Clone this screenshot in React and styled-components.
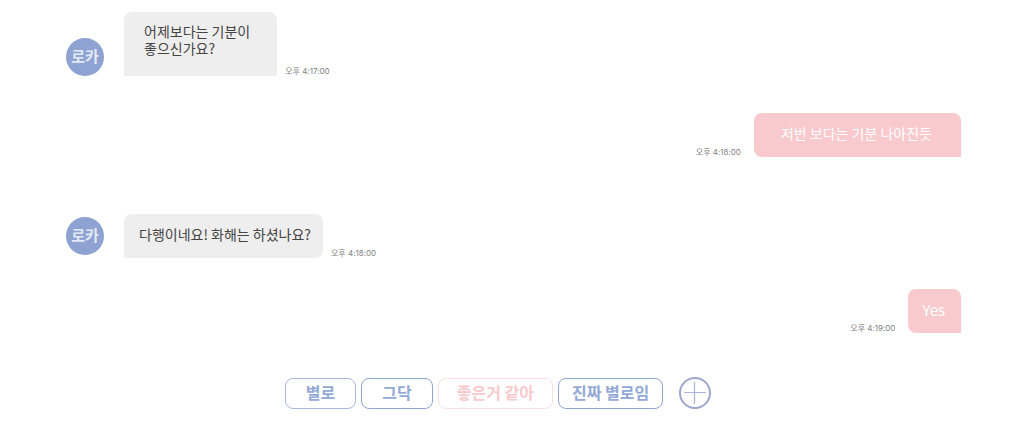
import React from 'react';
import styled, { createGlobalStyle } from 'styled-components';

const GlobalStyle = createGlobalStyle`
  * { box-sizing: border-box; }
  body {
    margin: 0;
    background: #fff;
    font-family: "Noto Sans CJK KR", "Noto Sans", sans-serif;
  }
`;

const Page = styled.main`
  padding: 12px 63px 16px 66px;
`;

const Messages = styled.ol`
  list-style: none;
  margin: 0;
  padding: 0;
`;

const Message = styled.li`
  display: flex;
  flex-direction: ${(p) => (p.$mine ? 'row-reverse' : 'row')};
  align-items: flex-end;
  margin-top: ${(p) => p.$gap || 0}px;
`;

const Avatar = styled.div`
  display: flex;
  align-items: center;
  justify-content: center;
  flex: none;
  width: 38px;
  height: 38px;
  margin: 0 20px ${(p) => p.$lift || 0}px 0;
  padding-bottom: 2px;
  border-radius: 50%;
  background: #8ea3d2;
  color: #e4e9f5;
  font-size: 15px;
  font-weight: 700;
  line-height: 20px;
`;

const Bubble = styled.p`
  margin: 0;
  padding: ${(p) => p.$pad};
  border-radius: ${(p) => (p.$mine ? '8px 8px 0 8px' : '8px 8px 8px 0')};
  border-bottom-right-radius: ${(p) => (p.$square || p.$mine ? 0 : 8)}px;
  background: ${(p) => (p.$mine ? '#f8c9cd' : '#eee')};
  color: ${(p) => (p.$mine ? '#fff' : '#444')};
  font-size: ${(p) => (p.$large ? 15 : 14)}px;
  line-height: 17px;
`;

const Time = styled.time`
  flex: none;
  margin: ${(p) => (p.$mine ? '0 13px 0 0' : '0 0 0 8px')};
  color: #808080;
  font-family: Inter, "Noto Sans CJK KR", sans-serif;
  font-size: 8px;
  line-height: 10px;
`;

const Replies = styled.div`
  display: flex;
  align-items: center;
  justify-content: center;
  gap: 5px;
  margin-top: 43px;
  padding-right: 30px;
`;

const Reply = styled.button`
  height: 31px;
  padding: 0 ${(p) => p.$pad}px 2px;
  border: 1px solid ${(p) => (p.$pink ? '#fbdfe2' : p.$pale ? '#a9b9de' : '#8ea6d4')};
  border-radius: 8px;
  background: #fff;
  color: ${(p) => (p.$pink ? '#f8c9cd' : '#93a9d6')};
  font-family: inherit;
  font-size: 16px;
  font-weight: 700;
  line-height: 20px;
  cursor: pointer;
`;

const AddButton = styled.button`
  width: 34px;
  height: 34px;
  margin-left: 10px;
  padding: 0;
  border: 0;
  background: none;
  cursor: pointer;

  svg { display: block; }
`;

export default function App() {
  return (
    <>
      <GlobalStyle />
      <Page>
        <Messages>
          <Message>
            <Avatar>로카</Avatar>
            <Bubble $square $pad="11px 27px 19px 20px">
              어제보다는 기분이<br />좋으신가요?
            </Bubble>
            <Time>오후 4:17:00</Time>
          </Message>
          <Message $mine $gap={37}>
            <Bubble $mine $pad="12px 29px 15px 27px">저번 보다는 기분 나아진듯</Bubble>
            <Time $mine>오후 4:18:00</Time>
          </Message>
          <Message $gap={57}>
            <Avatar $lift={3}>로카</Avatar>
            <Bubble $pad="12px 12px 15px 15px">다행이네요! 화해는 하셨나요?</Bubble>
            <Time>오후 4:18:00</Time>
          </Message>
          <Message $mine $gap={31}>
            <Bubble $mine $large $pad="12px 16px 15px 14px">Yes</Bubble>
            <Time $mine>오후 4:19:00</Time>
          </Message>
        </Messages>
        <Replies>
          <Reply type="button" $pale $pad={20}>별로</Reply>
          <Reply type="button" $pad={20}>그닥</Reply>
          <Reply type="button" $pink $pad={18}>좋은거 같아</Reply>
          <Reply type="button" $pad={13}>진짜 별로임</Reply>
          <AddButton type="button" aria-label="답변 추가">
            <svg width="34" height="34" viewBox="0 0 34 34" fill="none">
              <circle cx="17" cy="17" r="15" stroke="#9ca6ce" strokeWidth="2" />
              <path d="M6 16.5H28M16.5 6V28" stroke="#a9b4da" strokeWidth="1.2" />
            </svg>
          </AddButton>
        </Replies>
      </Page>
    </>
  );
}
